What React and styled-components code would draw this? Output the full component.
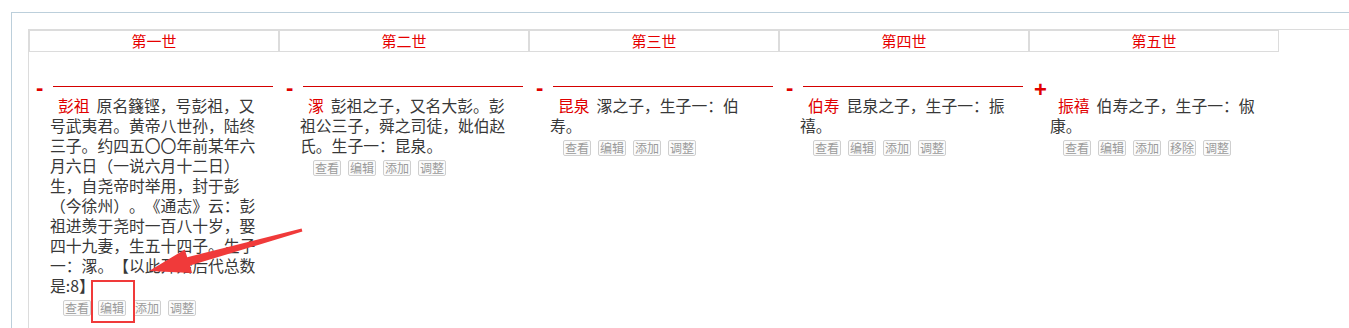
import React from "react";
import styled, { createGlobalStyle } from "styled-components";

const GlobalStyle = createGlobalStyle`
  html, body {
    margin: 0;
    padding: 0;
    background: #fff;
  }
  body {
    font-family: "Noto Sans CJK SC", "Liberation Sans", sans-serif;
    color: #333;
  }
`;

// generations shown in the tree
const generations = ["第一世", "第二世", "第三世", "第四世", "第五世"];

const people = [
  {
    name: "彭祖",
    intro:
      "原名籛铿，号彭祖，又号武夷君。黄帝八世孙，陆终三子。约四五〇〇年前某年六月六日（一说六月十二日）生，自尧帝时举用，封于彭（今徐州）。《通志》云：彭祖进羡于尧时一百八十岁，娶四十九妻，生五十四子。生子一：潈。【以此开始后代总数是:8】",
    open: true,
    actions: ["查看", "编辑", "添加", "调整"],
  },
  {
    name: "潈",
    intro: "彭祖之子，又名大彭。彭祖公三子，舜之司徒，妣伯赵氏。生子一：昆泉。",
    open: true,
    actions: ["查看", "编辑", "添加", "调整"],
  },
  {
    name: "昆泉",
    intro: "潈之子，生子一：伯寿。",
    open: true,
    actions: ["查看", "编辑", "添加", "调整"],
  },
  {
    name: "伯寿",
    intro: "昆泉之子，生子一：振禧。",
    open: true,
    actions: ["查看", "编辑", "添加", "调整"],
  },
  {
    name: "振禧",
    intro: "伯寿之子，生子一：俶康。",
    open: false,
    actions: ["查看", "编辑", "添加", "移除", "调整"],
  },
];

const App = () => {
  return (
    <Page>
      <GlobalStyle />
      <Frame>
        <Tree>
          <HeaderRow>
            {generations.map((g) => (
              <HeaderCell key={g}>{g}</HeaderCell>
            ))}
          </HeaderRow>
          <NodeRow>
            {people.map((p) => (
              <Column key={p.name}>
                <Head>
                  <Toggle $plus={!p.open}>{p.open ? "-" : "+"}</Toggle>
                  {p.open && <Branch />}
                </Head>
                <Intro>
                  <Name>{p.name}</Name>
                  {p.intro}
                </Intro>
                <Actions>
                  {p.actions.map((a) => (
                    <SmallButton key={a}>{a}</SmallButton>
                  ))}
                </Actions>
              </Column>
            ))}
          </NodeRow>
        </Tree>
      </Frame>

      {/* screenshot annotation: box round the edit button and an arrow */}
      <Annotation width="1349" height="328" viewBox="0 0 1349 328">
        <rect x="92" y="281" width="42" height="41" fill="none" stroke="#f03a3a" strokeWidth="2" />
        <polygon
          fill="#f03a3a"
          points="149,271 192,273 190,265.6 302.4,231.4 301.6,228.6 187.2,257.2 184.8,249.5"
        />
      </Annotation>
    </Page>
  );
};

// Styles
const Page = styled.div`
  position: relative;
  width: 1349px;
  height: 328px;
  overflow: hidden;
`;

const Frame = styled.div`
  margin: 12px 0 0 11px;
  height: 316px;
  box-sizing: border-box;
  padding: 16px 0 0 16px;
  border-top: 1px solid #bccfdb;
  border-left: 1px solid #bccfdb;
`;

const Tree = styled.div`
  height: 100%;
  border-top: 1px solid #dcdcdc;
  border-left: 1px solid #dcdcdc;
`;

const HeaderRow = styled.div`
  display: flex;
`;

const HeaderCell = styled.div`
  width: 250px;
  height: 22px;
  box-sizing: border-box;
  border: 1px solid #dcdcdc;
  text-align: center;
  font-size: 15px;
  line-height: 20px;
  color: #e60000;
`;

const NodeRow = styled.div`
  display: flex;
  padding-top: 25px;
`;

const Column = styled.div`
  width: 250px;
  display: flex;
  flex-direction: column;
`;

const Head = styled.div`
  display: flex;
  align-items: center;
  height: 19px;
`;

const Toggle = styled.span`
  width: 16px;
  margin-left: ${(p) => (p.$plus ? "5px" : "7px")};
  margin-top: ${(p) => (p.$plus ? "6px" : "1px")};
  font-family: "Liberation Sans", sans-serif;
  font-weight: bold;
  font-size: 22px;
  line-height: 19px;
  color: #e00000;
`;

const Branch = styled.div`
  width: 220px;
  height: 1px;
  margin-left: 1px;
  background: #d40000;
`;

const Intro = styled.div`
  width: 212px;
  margin-left: 21px;
  font-size: 15.8px;
  line-height: 20px;
  color: #383838;
  text-spacing-trim: space-all;
`;

const Name = styled.span`
  padding: 0 7px 0 8px;
  color: #e00000;
`;

const Actions = styled.div`
  display: flex;
  gap: 7px;
  margin: 4px 0 0 34px;
`;

const SmallButton = styled.span`
  height: 16px;
  box-sizing: border-box;
  padding: 0 1px;
  border: 1px solid #cfcfcf;
  border-radius: 2px;
  font-size: 12px;
  line-height: 14px;
  color: #9a9a9a;
  background: #fbfbfb;
`;

const Annotation = styled.svg`
  position: absolute;
  left: 0;
  top: 0;
  pointer-events: none;
`;

export default App;
